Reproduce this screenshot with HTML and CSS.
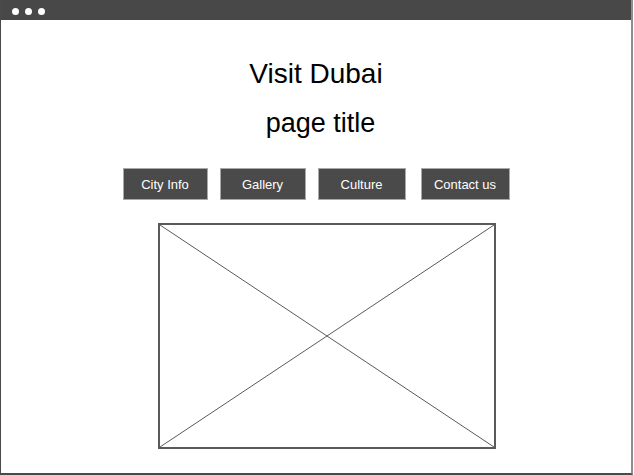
FILE: index.html
```html
<!DOCTYPE html>
<html>
<head>
<meta charset="utf-8">
<link rel="stylesheet" href="styles.css">
</head>
<body>
<div class="window">
  <div class="titlebar">
    <span class="dot"></span><span class="dot"></span><span class="dot"></span>
  </div>
  <div class="content">
    <h1 class="site-title">Visit Dubai</h1>
    <h2 class="page-title">page title</h2>
    <nav class="nav">
      <a class="btn btn-city">City Info</a>
      <a class="btn btn-gallery">Gallery</a>
      <a class="btn btn-culture">Culture</a>
      <a class="btn btn-contact">Contact us</a>
    </nav>
    <div class="placeholder">
      <svg width="338" height="226" viewBox="0 0 338 226" xmlns="http://www.w3.org/2000/svg">
        <line x1="2" y1="2" x2="336" y2="224" stroke="#5a5a5a" stroke-width="1"/>
        <line x1="336" y1="2" x2="2" y2="224" stroke="#5a5a5a" stroke-width="1"/>
        <rect x="1" y="1" width="336" height="224" fill="none" stroke="#5a5a5a" stroke-width="2"/>
      </svg>
    </div>
  </div>
</div>
</body>
</html>
```
FILE: styles.css
```css
html, body {
  margin: 0;
  padding: 0;
  background: #ffffff;
}
body {
  font-family: "Liberation Sans", Arial, sans-serif;
}
.window {
  width: 633px;
  height: 475px;
  box-sizing: border-box;
  border-left: 1px solid #4a4a4a;
  border-right: 2px solid #8e8e8e;
  border-bottom: 2px solid #4a4a4a;
  display: flex;
  flex-direction: column;
}
.titlebar {
  height: 20px;
  background: #484848;
  display: flex;
  align-items: flex-start;
  gap: 6px;
  padding: 8px 0 0 11px;
  box-sizing: border-box;
}
.dot {
  width: 7px;
  height: 7px;
  border-radius: 50%;
  background: #ffffff;
}
.content {
  display: flex;
  flex-direction: column;
  align-items: center;
  padding-top: 38px;
}
.site-title {
  margin: 0;
  font-size: 28px;
  line-height: 32px;
  font-weight: normal;
  color: #000;
}
.page-title {
  margin: 18px 0 0;
  padding-left: 9px;
  font-size: 27px;
  line-height: 30px;
  font-weight: normal;
  color: #000;
}
.nav {
  display: flex;
  gap: 12px;
  margin-top: 30px;
}
.btn {
  height: 32px;
  box-sizing: border-box;
  background: #4a4a4a;
  border: 1px solid #a9a9a9;
  color: #ffffff;
  font-size: 13px;
  padding-top: 1px;
  display: flex;
  align-items: center;
  justify-content: center;
}
.btn-city { width: 85px; }
.btn-gallery { width: 86px; }
.btn-culture { width: 88px; }
.btn-contact { width: 89px; margin-left: 3px; }
.placeholder {
  align-self: flex-start;
  margin-left: 157px;
  margin-top: 23px;
  width: 338px;
  height: 226px;
}
.placeholder svg {
  display: block;
}
```
